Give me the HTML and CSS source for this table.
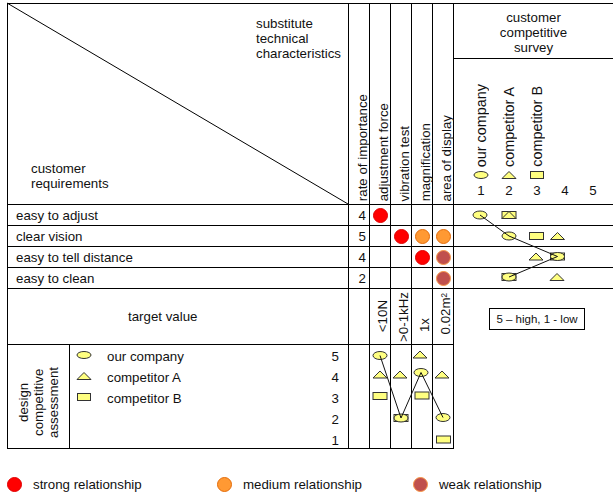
FILE: index.html
```html
<!DOCTYPE html>
<html lang="en">
<head>
<meta charset="utf-8">
<title>House of Quality</title>
<link rel="stylesheet" href="styles.css">
</head>
<body>
<div class="qfd">
  <!-- header -->
  <div class="cell corner">
    <div class="corner-top">substitute<br>technical<br>characteristics</div>
    <div class="corner-bottom">customer<br>requirements</div>
  </div>
  <div class="cell vhead"><span class="vt">rate of importance</span></div>
  <div class="cell vhead"><span class="vt">adjustment force</span></div>
  <div class="cell vhead"><span class="vt">vibration test</span></div>
  <div class="cell vhead"><span class="vt">magnification</span></div>
  <div class="cell vhead"><span class="vt">area of display</span></div>
  <div class="cell open-r survey-title">customer<br>competitive<br>survey</div>
  <div class="cell open-r survey-key">
    <div class="sk-row sk-labels">
      <span class="vt">our company</span><span class="vt">competitor A</span><span class="vt">competitor B</span>
    </div>
    <div class="sk-row sk-symbols">
      <svg class="sym" viewBox="0 0 16 10"><ellipse cx="8" cy="5" rx="7" ry="3.5"/></svg>
      <svg class="sym" viewBox="0 0 16 10"><polygon points="1,8.5 15,8.5 8,1.5"/></svg>
      <svg class="sym" viewBox="0 0 16 10"><rect x="1.5" y="1.5" width="13" height="7"/></svg>
    </div>
    <div class="sk-row sk-nums"><span>1</span><span>2</span><span>3</span><span>4</span><span>5</span></div>
  </div>

  <!-- requirement rows -->
  <div class="cell req">easy to adjust</div>
  <div class="cell imp">4</div>
  <div class="cell rel"><span class="dot strong"></span></div>
  <div class="cell rel"></div>
  <div class="cell rel"></div>
  <div class="cell rel"></div>
  <div class="cell open-r"></div>

  <div class="cell req">clear vision</div>
  <div class="cell imp">5</div>
  <div class="cell rel"></div>
  <div class="cell rel"><span class="dot strong"></span></div>
  <div class="cell rel"><span class="dot medium"></span></div>
  <div class="cell rel"><span class="dot medium"></span></div>
  <div class="cell open-r"></div>

  <div class="cell req">easy to tell distance</div>
  <div class="cell imp">4</div>
  <div class="cell rel"></div>
  <div class="cell rel"></div>
  <div class="cell rel"><span class="dot strong"></span></div>
  <div class="cell rel"><span class="dot weak"></span></div>
  <div class="cell open-r"></div>

  <div class="cell req">easy to clean</div>
  <div class="cell imp">2</div>
  <div class="cell rel"></div>
  <div class="cell rel"></div>
  <div class="cell rel"></div>
  <div class="cell rel"><span class="dot weak"></span></div>
  <div class="cell open-r"></div>

  <!-- target value -->
  <div class="cell target">target value</div>
  <div class="cell"></div>
  <div class="cell tv"><span class="vt">&lt;10N</span></div>
  <div class="cell tv"><span class="vt">&gt;0-1kHz</span></div>
  <div class="cell tv tv-low"><span class="vt">1x</span></div>
  <div class="cell tv tv-high"><span class="vt">0.02m²</span></div>
  <div class="scale-note"><div class="note-box">5 – high, 1 - low</div></div>

  <!-- design competitive assessment -->
  <div class="cell assess-title"><span class="vt multi">design<br>competitive<br>assessment</span></div>
  <div class="cell assess-key">
    <div class="ak-list">
      <div class="ak-row"><svg class="sym" viewBox="0 0 16 10"><ellipse cx="8" cy="5" rx="7" ry="3.5"/></svg><span>our company</span></div>
      <div class="ak-row"><svg class="sym" viewBox="0 0 16 10"><polygon points="1,8.5 15,8.5 8,1.5"/></svg><span>competitor A</span></div>
      <div class="ak-row"><svg class="sym" viewBox="0 0 16 10"><rect x="1.5" y="1.5" width="13" height="7"/></svg><span>competitor B</span></div>
    </div>
    <div class="ak-scale"><span>5</span><span>4</span><span>3</span><span>2</span><span>1</span></div>
  </div>
  <div class="cell"></div>
  <div class="cell"></div>
  <div class="cell"></div>
  <div class="cell"></div>
  <div class="cell"></div>

  <!-- overlays -->
  <svg class="overlay diag" viewBox="0 0 342 202" preserveAspectRatio="none"><line x1="0" y1="0" x2="342" y2="202"/></svg>

  <svg class="overlay survey-plot" viewBox="454 205 159 84">
    <ellipse cx="480" cy="215" rx="7" ry="4"/>
    <rect x="502" y="211.5" width="14" height="7"/>
    <polygon points="502,218.5 516,218.5 509,211.5"/>

    <ellipse cx="509" cy="236" rx="7" ry="4"/>
    <rect x="529.5" y="232.5" width="14" height="7"/>
    <polygon points="550.5,239.5 564.5,239.5 557.5,232.5"/>

    <polygon points="529,260 543,260 536,253"/>
    <rect x="550.5" y="253" width="14" height="7"/>
    <ellipse cx="557.5" cy="256.5" rx="7" ry="4"/>

    <rect x="502" y="273.5" width="14" height="7"/>
    <ellipse cx="509" cy="277" rx="7" ry="4"/>
    <polygon points="550,280.5 564,280.5 557,273.5"/>

    <polyline class="trend" points="480,215 509,236 557.5,256.5 509,277"/>
  </svg>

  <svg class="overlay assess-plot" viewBox="370 345 84 104">
    <ellipse cx="380" cy="355.5" rx="7" ry="4"/>
    <polygon points="373,378 387,378 380,371"/>
    <rect x="373" y="392.5" width="14" height="7"/>

    <polygon points="393,378 407,378 400,371"/>
    <rect x="394" y="414.5" width="14" height="7"/>
    <ellipse cx="401" cy="418" rx="7" ry="4"/>

    <polygon points="413,358 427,358 420,351"/>
    <ellipse cx="421" cy="372.5" rx="7" ry="4"/>
    <rect x="415" y="392" width="14" height="7"/>

    <polygon points="435,378 449,378 442,371"/>
    <ellipse cx="443" cy="417.5" rx="7" ry="4"/>
    <rect x="436.5" y="436" width="14" height="7"/>

    <polyline class="trend" points="380,355.5 401,418 421,372.5 443,417.5"/>
  </svg>
</div>

<div class="legend">
  <div class="legend-item"><span class="dot strong"></span><span>strong relationship</span></div>
  <div class="legend-item"><span class="dot medium"></span><span>medium relationship</span></div>
  <div class="legend-item"><span class="dot weak"></span><span>weak relationship</span></div>
</div>
</body>
</html>
```

FILE: styles.css
```css
* { box-sizing: border-box; }

html, body {
  margin: 0;
  padding: 0;
  background: #ffffff;
}

body {
  font-family: "Liberation Sans", Arial, sans-serif;
  font-size: 13.3px;
  line-height: 15px;
  color: #111111;
  overflow: hidden;
}

.qfd {
  position: relative;
  display: grid;
  grid-template-columns: 62px 279px repeat(5, 21px) 159px;
  grid-template-rows: 55px 146px repeat(4, 21px) 56px 104px;
  width: max-content;
  margin: 3px 0 0 7px;
  border-left: 1px solid #000;
  border-top: 1px solid #000;
}

.cell {
  border-right: 1px solid #000;
  border-bottom: 1px solid #000;
}

.open-r { border-right: 0; }

/* rotated text, reading bottom to top */
.vt {
  writing-mode: vertical-rl;
  transform: rotate(180deg);
  white-space: nowrap;
  line-height: 15px;
}

/* header corner */
.corner {
  grid-column: span 2;
  grid-row: span 2;
  display: flex;
  flex-direction: column;
  justify-content: space-between;
  padding: 12px 7px 13px 23px;
}

.corner-top { align-self: flex-end; }

.vhead {
  grid-row: span 2;
  display: flex;
  align-items: flex-end;
  padding: 0 0 3px 6px;
}

.survey-title {
  text-align: center;
  padding-top: 6px;
}

.survey-key {
  display: flex;
  flex-direction: column;
  justify-content: flex-end;
  padding: 0 0 6px 13px;
}

.sk-row {
  display: grid;
  grid-template-columns: repeat(5, 28px);
  justify-items: center;
}

.sk-labels {
  align-items: end;
  font-size: 14.4px;
}

.sk-symbols {
  margin-top: 3px;
  height: 10px;
}

.sk-nums { margin-top: 3px; }

.sym {
  width: 16px;
  height: 10px;
  display: block;
}

.sym ellipse, .sym polygon, .sym rect,
.survey-plot ellipse, .survey-plot polygon, .survey-plot rect,
.assess-plot ellipse, .assess-plot polygon, .assess-plot rect {
  fill: #ffff80;
  stroke: #333333;
  stroke-width: 1;
}

/* requirement rows */
.req {
  grid-column: span 2;
  display: flex;
  align-items: center;
  padding-left: 8px;
}

.imp {
  display: flex;
  align-items: center;
  justify-content: flex-end;
  padding-right: 3px;
}

.rel {
  display: flex;
  align-items: center;
  justify-content: center;
}

.dot {
  display: block;
  width: 15px;
  height: 15px;
  border-radius: 50%;
  flex: none;
}

.dot.strong { background: #ff0000; border: 1px solid #e00000; }
.dot.medium { background: #ff9933; border: 1px solid #e46c0a; }
.dot.weak { background: #c0504d; border: 1px solid #f79646; }

/* target value row */
.target {
  grid-column: span 2;
  display: flex;
  align-items: center;
  padding-left: 120px;
}

.tv {
  display: flex;
  align-items: center;
  padding-left: 5px;
}

.tv-low { padding-top: 18px; }
.tv-high { padding-bottom: 6px; }

.scale-note {
  padding: 19px 0 0 35px;
}

.note-box {
  width: 96px;
  height: 22px;
  border: 1px solid #000;
  display: flex;
  align-items: center;
  justify-content: center;
  font-size: 11.5px;
}

/* design competitive assessment */
.assess-title {
  display: flex;
  align-items: center;
  justify-content: center;
  padding-top: 12px;
}

.vt.multi { text-align: center; }

.assess-key {
  display: flex;
  justify-content: space-between;
  padding: 1px 9px 0 6px;
}

.ak-row {
  height: 21px;
  display: flex;
  align-items: center;
}

.ak-row .sym {
  margin: 0 15px 4px 0;
}

.ak-scale {
  display: flex;
  flex-direction: column;
  align-items: flex-end;
  line-height: 21px;
}

/* overlays drawn on top of the grid */
.overlay {
  position: absolute;
  width: 100%;
  height: 100%;
  overflow: visible;
}

.diag {
  grid-column: 1 / 3;
  grid-row: 1 / 3;
  top: -1px;
  left: -1px;
}

.diag line {
  stroke: #000;
  stroke-width: 1;
  vector-effect: non-scaling-stroke;
}

.survey-plot {
  grid-column: 8;
  grid-row: 3 / 7;
  top: 0;
  left: 0;
}

.assess-plot {
  grid-column: 4 / 8;
  grid-row: 8;
  top: 0;
  left: 0;
}

.trend {
  fill: none;
  stroke: #111;
  stroke-width: 1;
}

/* bottom legend */
.legend {
  display: grid;
  grid-template-columns: 210px 196px auto;
  margin: 28px 0 0 7px;
}

.legend-item {
  display: flex;
  align-items: center;
  gap: 11px;
}
```
